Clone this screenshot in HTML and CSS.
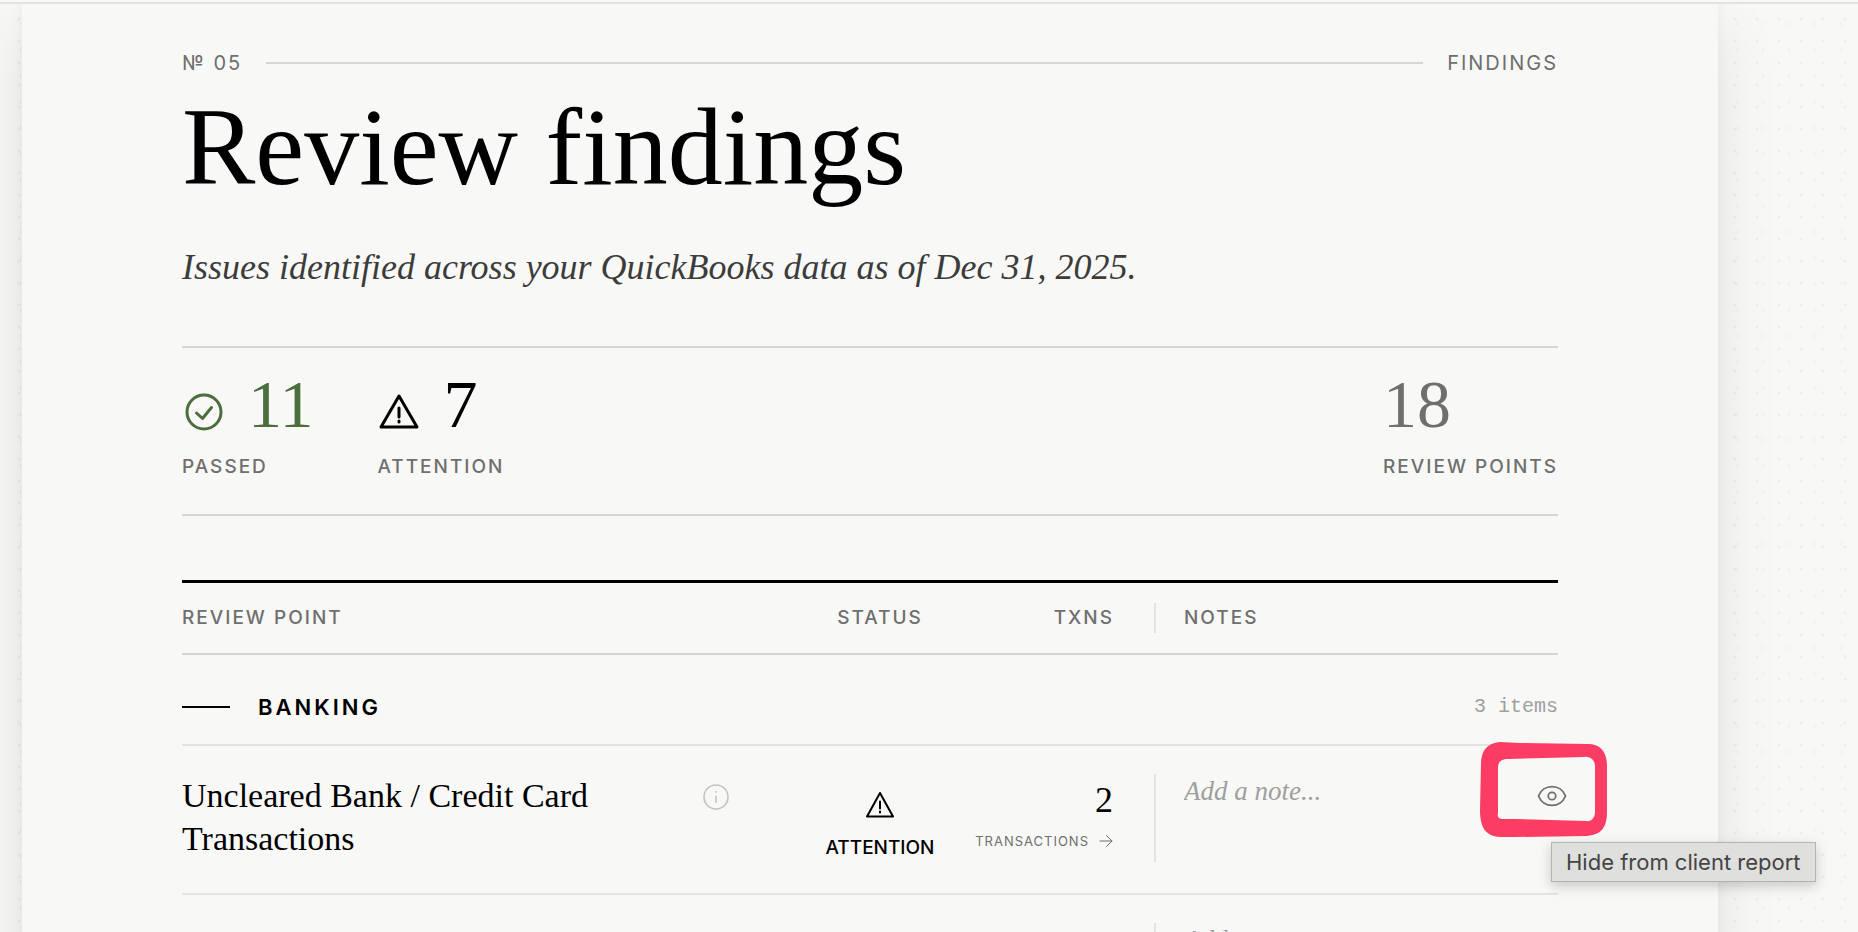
FILE: index.html
```
<!DOCTYPE html>
<html lang="en">
<head>
    <meta charset="UTF-8">
    <meta name="viewport" content="width=device-width, initial-scale=1.0">
    <title>Review findings</title>
    <link rel="stylesheet" href="styles.css">
</head>
<body>
    <main class="paper">
        <header>
            <div class="eyebrow">
                <span>№ 05</span>
                <span class="eyebrow-rule"></span>
                <span>FINDINGS</span>
            </div>
            <h1 class="title">Review findings</h1>
            <p class="subtitle">Issues identified across your QuickBooks data as of Dec 31, 2025.</p>
        </header>

        <section class="stats">
            <div class="stat passed">
                <div class="stat-value">
                    <svg class="stat-icon" viewBox="0 0 44 44">
                        <circle cx="22" cy="22" r="17"/>
                        <path d="M14.500 23l6 5.500 9-11"/>
                    </svg>
                    <span>11</span>
                </div>
                <div class="label">PASSED</div>
            </div>
            <div class="stat attention">
                <div class="stat-value">
                    <svg class="stat-icon" viewBox="0 0 44 44">
                        <path d="M22 6L40 37H4Z"/>
                        <path d="M22 18v9M22 31v1"/>
                    </svg>
                    <span>7</span>
                </div>
                <div class="label">ATTENTION</div>
            </div>
            <div class="stat total">
                <div class="stat-value"><span>18</span></div>
                <div class="label">REVIEW POINTS</div>
            </div>
        </section>

        <table class="findings">
            <thead>
                <tr>
                    <th class="col-point label">REVIEW POINT</th>
                    <th class="col-status label">STATUS</th>
                    <th class="col-txns label">TXNS</th>
                    <th class="col-notes label"><div class="notes">NOTES</div></th>
                </tr>
            </thead>
            <tbody>
                <tr class="group-row">
                    <th colspan="4">
                        <div class="group">
                            <span class="group-dash"></span>
                            <span class="group-name">BANKING</span>
                            <span class="group-count">3 items</span>
                        </div>
                    </th>
                </tr>
                <tr class="item">
                    <td>
                        <div class="point">
                            <span class="point-name">Uncleared Bank / Credit Card Transactions</span>
                            <button class="icon-btn info" aria-label="About this review point">
                                <svg viewBox="0 0 24 24"><circle cx="12" cy="12" r="9"/><path d="M12 11.500v4.500M12 8v.4"/></svg>
                            </button>
                        </div>
                    </td>
                    <td>
                        <div class="status">
                            <svg viewBox="0 0 32 32">
                                <path d="M16 4L29 27.500H3Z"/>
                                <path d="M16 12.500v7M16 22.500v1"/>
                            </svg>
                            <span>ATTENTION</span>
                        </div>
                    </td>
                    <td>
                        <div class="txns">
                            <span class="txns-count">2</span>
                            <a class="txns-link" href="#transactions">TRANSACTIONS
                                <svg viewBox="0 0 14 14"><path d="M1 7h12M7.500 1.500L13 7l-5.500 5.500"/></svg>
                            </a>
                        </div>
                    </td>
                    <td>
                        <div class="notes">
                            <textarea class="note-input" rows="1" placeholder="Add a note..." aria-label="Note"></textarea>
                            <div class="visibility">
                                <button class="icon-btn eye" aria-describedby="hide-tip" aria-label="Hide from client report">
                                    <svg viewBox="0 0 24 24"><path d="M2 12.300a1 1 0 0 1 0-.6 10.800 10.800 0 0 1 20 0 1 1 0 0 1 0 .6 10.800 10.800 0 0 1-20 0Z"/><circle cx="12" cy="12" r="2.800"/></svg>
                                </button>
                                <svg class="marker" viewBox="0 0 128 96"><path fill-rule="evenodd" d="M20 0C7 1 1 9 1 22L0 68C0 86 6 94 20 95L36 95 106 94C121 93 127 86 127 70L127 24C127 9 120 2 108 2L40 1ZM28 17L104 15C110 14 115 18 115 24L115 70C115 76 111 80 106 79L36 77 22 77C18 77 17 74 18 71L18 60 18 26C18 20 21 17 28 17Z"/></svg>
                                <span class="tooltip" id="hide-tip" role="tooltip">Hide from client report</span>
                            </div>
                        </div>
                    </td>
                </tr>
                <tr class="item">
                    <td></td>
                    <td></td>
                    <td></td>
                    <td>
                        <div class="notes">
                            <textarea class="note-input" rows="1" placeholder="Add a note..." aria-label="Note"></textarea>
                        </div>
                    </td>
                </tr>
            </tbody>
        </table>
    </main>
</body>
</html>
```
FILE: styles.css
```
* {
    margin: 0;
    padding: 0;
    box-sizing: border-box;
}

body {
    height: 100vh;
    overflow: hidden;
    padding: 0 140px 0 22px;
    border-top: 2px solid #f8f8f7;
    background-color: #f8f8f7;
    background-image:
        radial-gradient(circle, #eeeeed 1px, transparent 2px),
        radial-gradient(circle, #f1f1f0 1px, transparent 2px);
    background-size: 22px 22px, 26px 26px;
    background-position: 8px 8px, 8px 11px;
    color: #000;
    font-family: Inter, "Liberation Sans", sans-serif;
    font-size: 20px;
}

svg {
    display: block;
    fill: none;
    stroke: currentColor;
    stroke-linecap: round;
    stroke-linejoin: round;
}

.paper {
    min-height: 100%;
    padding: 45px 160px;
    background: #f8f8f7;
    box-shadow: 0 0 12px rgba(0, 0, 0, 0.04), 0 20px 60px rgba(0, 0, 0, 0.09);
}

/* page top line runs over the full window */
body::before {
    content: "";
    position: absolute;
    top: 2px;
    left: 0;
    right: 0;
    height: 2px;
    background: #e3e3e1;
}

/* header */
.eyebrow {
    display: flex;
    align-items: center;
    gap: 24px;
    line-height: 32px;
    letter-spacing: 2px;
    color: #6f6f6e;
}

.eyebrow-rule {
    flex: 1;
    height: 2px;
    background: #d9d5d3;
}

.title {
    margin-top: 8px;
    font-family: "Liberation Serif", serif;
    font-size: 110px;
    font-weight: 400;
    line-height: 120px;
}

.subtitle {
    margin-top: 32px;
    font-family: "Liberation Serif", serif;
    font-size: 36px;
    font-style: italic;
    line-height: 56px;
    color: #3c3c3b;
}

/* stats */
.stats {
    display: flex;
    gap: 64px;
    margin-top: 51px;
    padding: 24px 0 32px;
    border-top: 2px solid #d9d5d3;
    border-bottom: 2px solid #d9d5d3;
}

.stat-value {
    display: flex;
    align-items: center;
    gap: 22px;
    height: 64px;
    font-family: "Liberation Serif", serif;
    font-size: 68px;
    line-height: 64px;
}

.stat-icon {
    width: 44px;
    height: 44px;
    margin-top: 16px;
    stroke-width: 3;
}

.passed .stat-value {
    color: #4a6e3c;
}

.total {
    margin-left: auto;
}

.total .stat-value {
    color: #6f6f6e;
}

.label {
    font-size: 19px;
    font-weight: 500;
    line-height: 30px;
    letter-spacing: 2px;
    color: #6f6f6e;
}

.stat .label {
    margin-top: 16px;
}

/* table */
.findings {
    width: 100%;
    margin-top: 64px;
    border-top: 3px solid #000;
    border-collapse: collapse;
    table-layout: fixed;
}

.findings th {
    padding: 20px 0;
    text-align: left;
    border-bottom: 2px solid #d9d5d3;
}

.findings .col-status {
    width: 180px;
    text-align: center;
}

.findings .col-txns {
    width: 184px;
    padding-right: 40px;
    text-align: right;
}

.findings .col-notes {
    width: 404px;
}

.findings .group-row th {
    padding: 37px 0 22px;
    border-bottom: 2px solid #e3e3e1;
}

.group {
    display: flex;
    align-items: center;
    line-height: 30px;
}

.group-dash {
    width: 48px;
    height: 2px;
    margin-right: 28px;
    background: #000;
}

.group-name {
    font-size: 22px;
    font-weight: 600;
    letter-spacing: 3px;
}

.group-count {
    margin-left: auto;
    font-family: "Liberation Mono", monospace;
    font-weight: 400;
    color: #9f9f9e;
}

.item td {
    padding: 28px 0 30px;
    vertical-align: top;
    border-bottom: 2px solid #e3e3e1;
}

.point {
    display: flex;
    align-items: flex-start;
    gap: 24px;
    padding-right: 58px;
}

.point-name {
    flex: 1;
    font-family: "Liberation Serif", serif;
    font-size: 34px;
    line-height: 43px;
}

.icon-btn {
    border: 0;
    background: none;
    cursor: pointer;
}

.info {
    width: 32px;
    height: 46px;
    color: #c4c2c0;
}

.info svg {
    width: 32px;
    height: 32px;
    stroke-width: 1.2;
}

.status {
    display: flex;
    flex-direction: column;
    align-items: center;
    gap: 12px;
    padding-top: 15px;
    font-size: 19px;
    font-weight: 500;
    line-height: 30px;
}

.status svg {
    width: 32px;
    height: 32px;
    stroke-width: 2;
}

.txns {
    display: flex;
    flex-direction: column;
    align-items: flex-end;
    padding-right: 41px;
}

.txns-count {
    font-family: "Liberation Serif", serif;
    font-size: 36px;
    line-height: 52px;
}

.txns-link {
    display: flex;
    align-items: center;
    gap: 10px;
    font-size: 13px;
    line-height: 30px;
    letter-spacing: 1px;
    color: #6f6f6e;
    text-decoration: none;
}

.txns-link svg {
    width: 14px;
    height: 14px;
}

.notes {
    display: flex;
    justify-content: space-between;
    padding-left: 28px;
    border-left: 2px solid #e3e3e1;
}

.item .notes {
    height: 88px;
}

.note-input {
    width: 260px;
    height: 34px;
    border: 0;
    outline: 0;
    resize: none;
    overflow: hidden;
    background: none;
    font-family: "Liberation Serif", serif;
    font-size: 27px;
    font-style: italic;
    line-height: 34px;
}

.note-input::placeholder {
    color: #9f9f9e;
}

.visibility {
    position: relative;
    width: 32px;
    height: 32px;
    margin-top: 6px;
    margin-right: -10px;
}

.eye {
    color: #6f6f6e;
}

.eye svg {
    width: 32px;
    height: 32px;
    stroke-width: 1.3;
}

/* hand-drawn highlight round the eye button */
.marker {
    position: absolute;
    top: -38px;
    left: -56px;
    width: 128px;
    height: 96px;
    fill: #fb3d63;
    stroke: none;
    pointer-events: none;
}

.tooltip {
    position: absolute;
    top: 62px;
    left: 15px;
    padding: 0 14px;
    border: 1px solid #b4b4b3;
    background: #dfdfde;
    box-shadow: 0 4px 12px rgba(0, 0, 0, 0.2);
    font-size: 22px;
    line-height: 38px;
    white-space: nowrap;
    color: #444;
}
```
